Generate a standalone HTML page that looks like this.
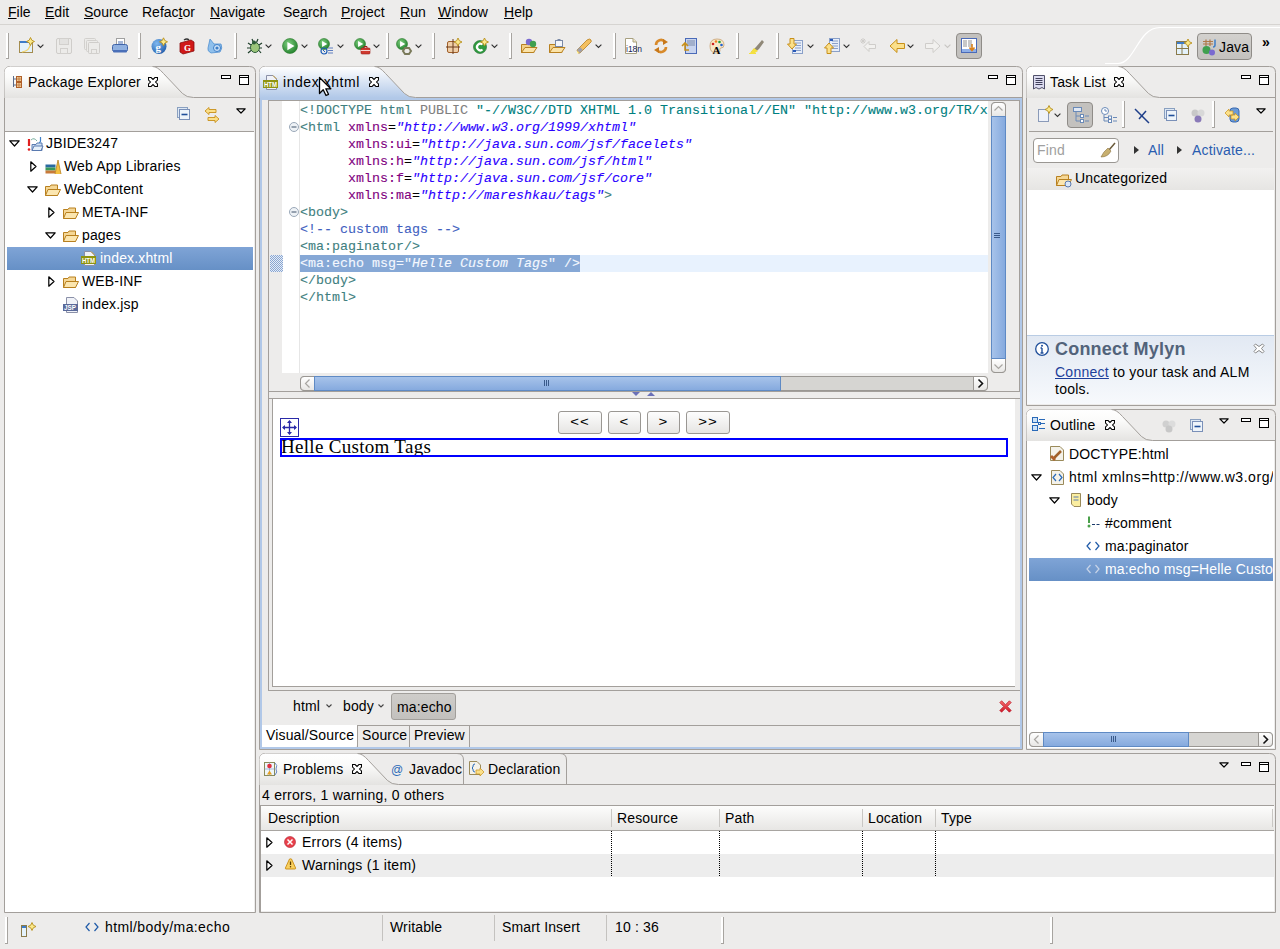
<!DOCTYPE html><html><head><meta charset="utf-8"><style>
html,body{margin:0;padding:0}
body{width:1280px;height:949px;position:relative;overflow:hidden;background:#edeceb;font-family:"Liberation Sans",sans-serif;font-size:14px;color:#000}
.a{position:absolute}
.t{position:absolute;white-space:pre;line-height:14px;font-family:"Liberation Sans",sans-serif;letter-spacing:0.15px}
.m{position:absolute;white-space:pre;font-family:"Liberation Mono",monospace;font-size:13.33px;line-height:17px;-webkit-text-stroke:0.1px currentColor}
svg.c{position:absolute;left:0;top:0}
svg.i{position:absolute;overflow:visible}
.tg{color:#3f7f7f}.at{color:#7f007f}.av{color:#2a00ff;font-style:italic}.cm{color:#3f5fbf}.pu{color:#808080}.dt{color:#008080}
.clip{position:absolute;overflow:hidden}
</style></head><body>
<svg class="c" width="1280" height="949"><defs>
<linearGradient id="gw" x1="0" y1="0" x2="0" y2="1"><stop offset="0" stop-color="#ffffff"/><stop offset="0.35" stop-color="#fbfbfa"/><stop offset="1" stop-color="#e4e3e1"/></linearGradient>
<linearGradient id="gb" x1="0" y1="0" x2="0" y2="1"><stop offset="0" stop-color="#ffffff"/><stop offset="1" stop-color="#b1c8e8"/></linearGradient>
</defs><path d="M4.5 912.5 V72.5 Q4.5 66.5 10.5 66.5 H249.5 Q255.5 66.5 255.5 72.5 V912.5 Z" fill="#edeceb" stroke="#a39f9b"/><path d="M4.5 98 V72.5 Q4.5 66.5 10.5 66.5 H152.5 Q157.5 66.5 163.5 73.5 L182.5 93.5 Q186.5 97.5 193.5 97.5 V98 Z" fill="url(#gw)"/><path d="M152.5 66.5 Q157.5 66.5 163.5 73.5 L182.5 93.5 Q186.5 97.5 193.5 97.5 H255.5" fill="none" stroke="#a39f9b"/><path d="M259.5 749.5 V72.5 Q259.5 66.5 265.5 66.5 H1016.5 Q1022.5 66.5 1022.5 72.5 V749.5 Z" fill="#edeceb" stroke="#a39f9b"/><path d="M259.5 98 V72.5 Q259.5 66.5 265.5 66.5 H374.5 Q379.5 66.5 385.5 73.5 L404.5 93.5 Q408.5 97.5 415.5 97.5 V98 Z" fill="url(#gb)"/><path d="M374.5 66.5 Q379.5 66.5 385.5 73.5 L404.5 93.5 Q408.5 97.5 415.5 97.5 H1022.5" fill="none" stroke="#a39f9b"/><path d="M1026.5 405.5 V72.5 Q1026.5 66.5 1032.5 66.5 H1269.5 Q1275.5 66.5 1275.5 72.5 V405.5 Z" fill="#edeceb" stroke="#a39f9b"/><path d="M1026.5 98 V72.5 Q1026.5 66.5 1032.5 66.5 H1118.5 Q1123.5 66.5 1129.5 73.5 L1148.5 93.5 Q1152.5 97.5 1159.5 97.5 V98 Z" fill="url(#gw)"/><path d="M1118.5 66.5 Q1123.5 66.5 1129.5 73.5 L1148.5 93.5 Q1152.5 97.5 1159.5 97.5 H1275.5" fill="none" stroke="#a39f9b"/><path d="M1026.5 749.5 V415.5 Q1026.5 409.5 1032.5 409.5 H1269.5 Q1275.5 409.5 1275.5 415.5 V749.5 Z" fill="#edeceb" stroke="#a39f9b"/><path d="M1026.5 441 V415.5 Q1026.5 409.5 1032.5 409.5 H1111.5 Q1116.5 409.5 1122.5 416.5 L1141.5 436.5 Q1145.5 440.5 1152.5 440.5 V441 Z" fill="url(#gw)"/><path d="M1111.5 409.5 Q1116.5 409.5 1122.5 416.5 L1141.5 436.5 Q1145.5 440.5 1152.5 440.5 H1275.5" fill="none" stroke="#a39f9b"/><path d="M259.5 912.5 V759.5 Q259.5 753.5 265.5 753.5 H1269.5 Q1275.5 753.5 1275.5 759.5 V912.5 Z" fill="#edeceb" stroke="#a39f9b"/><path d="M259.5 785 V759.5 Q259.5 753.5 265.5 753.5 H357.5 Q362.5 753.5 368.5 760.5 L387.5 780.5 Q391.5 784.5 398.5 784.5 V785 Z" fill="url(#gw)"/><path d="M357.5 753.5 Q362.5 753.5 368.5 760.5 L387.5 780.5 Q391.5 784.5 398.5 784.5 H1275.5" fill="none" stroke="#a39f9b"/><path d="M463.5 784 V760 Q463.5 753.5 457 753.5" fill="none" stroke="#a39f9b"/><path d="M566.5 784 V760 Q566.5 753.5 560 753.5" fill="none" stroke="#a39f9b"/></svg>
<div class="t" style="left:8px;top:5px;font-size:14px;color:#000;letter-spacing:0"><u>F</u>ile</div>
<div class="t" style="left:45px;top:5px;font-size:14px;color:#000;letter-spacing:0"><u>E</u>dit</div>
<div class="t" style="left:84px;top:5px;font-size:14px;color:#000;letter-spacing:0"><u>S</u>ource</div>
<div class="t" style="left:142px;top:5px;font-size:14px;color:#000;letter-spacing:0">Refac<u>t</u>or</div>
<div class="t" style="left:210px;top:5px;font-size:14px;color:#000;letter-spacing:0"><u>N</u>avigate</div>
<div class="t" style="left:283px;top:5px;font-size:14px;color:#000;letter-spacing:0">Se<u>a</u>rch</div>
<div class="t" style="left:341px;top:5px;font-size:14px;color:#000;letter-spacing:0"><u>P</u>roject</div>
<div class="t" style="left:400px;top:5px;font-size:14px;color:#000;letter-spacing:0"><u>R</u>un</div>
<div class="t" style="left:438px;top:5px;font-size:14px;color:#000;letter-spacing:0"><u>W</u>indow</div>
<div class="t" style="left:504px;top:5px;font-size:14px;color:#000;letter-spacing:0"><u>H</u>elp</div>
<div class="a" style="left:0px;top:24px;width:1280px;height:1px;background:#d6d4d1"></div>
<div class="a" style="left:956px;top:33px;width:26px;height:26px;box-sizing:border-box;border:1px solid #8f8c88;border-radius:4px;background:#c3c1be"></div>
<div class="a" style="left:6px;top:33px;width:2px;height:26px;background:#fff"></div><div class="a" style="left:8px;top:33px;width:1px;height:26px;background:#a7a4a0"></div><div class="a" style="left:6px;top:58px;width:3px;height:1px;background:#a7a4a0"></div>
<svg class="i" style="left:19px;top:38px" width="16" height="16" viewBox="0 0 16 16"><rect x="0.5" y="3.5" width="13" height="11" fill="#e4f2fb" stroke="#a48c4e"/><rect x="1" y="3" width="12" height="2" fill="#3d7cc9"/><path d="M3 14 Q11 13 11.5 5" fill="none" stroke="#f3d36b" stroke-width="1.2"/><g transform="translate(11.5,3.5) scale(1.0)"><path d="M0 -4 L1.3 -1.3 L4 0 L1.3 1.3 L0 4 L-1.3 1.3 L-4 0 L-1.3 -1.3 Z" fill="#fbe98a" stroke="#b8901c" stroke-width="0.9"/></g></svg>
<svg class="i" style="left:37px;top:44px" width="7" height="5" viewBox="0 0 7 5"><path d="M0.6 0.6 L3.5 3.4 L6.4 0.6" fill="none" stroke="#333" stroke-width="1.15"/></svg>
<svg class="i" style="left:56px;top:38px" width="16" height="16" viewBox="0 0 16 16"><rect x="0.5" y="0.5" width="15" height="15" rx="1.5" fill="#ecebe9" stroke="#cfcdca"/><rect x="3.5" y="0.5" width="9" height="6" fill="#e3e2e0" stroke="#d2d0cd"/><rect x="4.5" y="10.5" width="7" height="5" fill="#ecebe9" stroke="#d2d0cd"/></svg>
<svg class="i" style="left:84px;top:38px" width="16" height="16" viewBox="0 0 16 16"><rect x="0.5" y="0.5" width="11" height="11" rx="1" fill="#ecebe9" stroke="#d2d0cd"/><rect x="2.5" y="2.5" width="11" height="11" rx="1" fill="#ecebe9" stroke="#d2d0cd"/><rect x="4.5" y="4.5" width="11" height="11" rx="1" fill="#ecebe9" stroke="#cfcdca"/><rect x="7.5" y="11.5" width="5" height="4" fill="#ecebe9" stroke="#d2d0cd"/></svg>
<svg class="i" style="left:112px;top:38px" width="16" height="16" viewBox="0 0 16 16"><rect x="4.5" y="0.5" width="8" height="8" fill="#fff" stroke="#a0a0a0"/><path d="M6 4h5M6 6h5" stroke="#4a6fb0"/><rect x="0.5" y="6.5" width="15" height="7" rx="2" fill="#8fb0e0" stroke="#3f63a8"/><rect x="1" y="12" width="14" height="2.5" rx="1" fill="#4a6fb8"/></svg>
<div class="a" style="left:138px;top:33px;width:2px;height:26px;background:#fff"></div><div class="a" style="left:140px;top:33px;width:1px;height:26px;background:#a7a4a0"></div><div class="a" style="left:138px;top:58px;width:3px;height:1px;background:#a7a4a0"></div>
<svg class="i" style="left:151px;top:38px" width="16" height="16" viewBox="0 0 16 16"><defs><radialGradient id="gg" cx="0.35" cy="0.3" r="0.8"><stop offset="0" stop-color="#7fb8f0"/><stop offset="1" stop-color="#1d5aa8"/></radialGradient></defs><circle cx="8" cy="8.5" r="7.5" fill="url(#gg)"/><text x="4.5" y="12.5" font-family="Liberation Serif" font-size="11" fill="#fff" font-weight="bold">g</text><g transform="translate(12.5,3.8) scale(1.0)"><path d="M0 -4 L1.3 -1.3 L4 0 L1.3 1.3 L0 4 L-1.3 1.3 L-4 0 L-1.3 -1.3 Z" fill="#fbe98a" stroke="#b8901c" stroke-width="0.9"/></g></svg>
<svg class="i" style="left:179px;top:38px" width="16" height="16" viewBox="0 0 16 16"><path d="M1 5 L12 2 L15 4 L15 13 L4 16 L1 14 Z" fill="#d01818" stroke="#8a0e0e" stroke-width="0.8"/><path d="M5 2 Q8 0 10 2" fill="none" stroke="#333" stroke-width="1.5"/><text x="5" y="12.5" font-family="Liberation Serif" font-size="9" fill="#fff" font-weight="bold">G</text></svg>
<svg class="i" style="left:207px;top:38px" width="16" height="16" viewBox="0 0 16 16"><path d="M3 1 L7 6 L14 6 Q16 10 13 14 L4 15 Q0 13 1 10 Z" fill="#8fc0ec" stroke="#4f8fd0" stroke-width="0.8"/><circle cx="10" cy="10" r="3.5" fill="#cfe4f8" stroke="#3f7fc8"/><circle cx="10" cy="10" r="1.6" fill="#3f7fc8"/></svg>
<div class="a" style="left:234px;top:33px;width:2px;height:26px;background:#fff"></div><div class="a" style="left:236px;top:33px;width:1px;height:26px;background:#a7a4a0"></div><div class="a" style="left:234px;top:58px;width:3px;height:1px;background:#a7a4a0"></div>
<svg class="i" style="left:246px;top:38px" width="16" height="16" viewBox="0 0 16 16"><ellipse cx="9" cy="9.5" rx="4.5" ry="5" fill="#9cc67a" stroke="#2f5d3a"/><path d="M2 5 L5 7 M1 10 L4.5 10 M2 15 L5 12.5 M16 5 L13 7 M16 10 L13.5 10 M15 15 L13 12.5 M6 1 L7.5 4.5 M12 1 L10.5 4.5" stroke="#1f3f2a" stroke-width="1.2"/><circle cx="8" cy="4.5" r="2" fill="#2f5d3a"/></svg>
<svg class="i" style="left:265px;top:44px" width="7" height="5" viewBox="0 0 7 5"><path d="M0.6 0.6 L3.5 3.4 L6.4 0.6" fill="none" stroke="#333" stroke-width="1.15"/></svg>
<svg class="i" style="left:282px;top:38px" width="16" height="16" viewBox="0 0 16 16"><defs><radialGradient id="gp" cx="0.4" cy="0.35" r="0.7"><stop offset="0" stop-color="#7fcf7f"/><stop offset="1" stop-color="#1f7f2a"/></radialGradient></defs><circle cx="8" cy="8" r="7.5" fill="url(#gp)" stroke="#2a7a2a" stroke-width="0.6"/><path d="M5.375 3.875 L12.5 8 L5.375 12.125 Z" fill="#fff"/></svg>
<svg class="i" style="left:301px;top:44px" width="7" height="5" viewBox="0 0 7 5"><path d="M0.6 0.6 L3.5 3.4 L6.4 0.6" fill="none" stroke="#333" stroke-width="1.15"/></svg>
<svg class="i" style="left:318px;top:38px" width="16" height="16" viewBox="0 0 16 16"><defs><radialGradient id="gp" cx="0.4" cy="0.35" r="0.7"><stop offset="0" stop-color="#7fcf7f"/><stop offset="1" stop-color="#1f7f2a"/></radialGradient></defs><circle cx="6" cy="6" r="5.5" fill="url(#gp)" stroke="#2a7a2a" stroke-width="0.6"/><path d="M4.075 2.9749999999999996 L9.3 6 L4.075 9.025 Z" fill="#fff"/><circle cx="6" cy="13" r="3" fill="none" stroke="#1f5fb8" stroke-width="1.2"/><path d="M5 12 L7 14" stroke="#1f5fb8"/><path d="M10 10h5M10 12.5h5M10 15h5" stroke="#5f7fc0" stroke-width="1"/></svg>
<svg class="i" style="left:337px;top:44px" width="7" height="5" viewBox="0 0 7 5"><path d="M0.6 0.6 L3.5 3.4 L6.4 0.6" fill="none" stroke="#333" stroke-width="1.15"/></svg>
<svg class="i" style="left:354px;top:38px" width="16" height="16" viewBox="0 0 16 16"><defs><radialGradient id="gp" cx="0.4" cy="0.35" r="0.7"><stop offset="0" stop-color="#7fcf7f"/><stop offset="1" stop-color="#1f7f2a"/></radialGradient></defs><circle cx="6" cy="6" r="5.5" fill="url(#gp)" stroke="#2a7a2a" stroke-width="0.6"/><path d="M4.075 2.9749999999999996 L9.3 6 L4.075 9.025 Z" fill="#fff"/><rect x="7" y="10" width="9" height="6" rx="1" fill="#d03a30" stroke="#9a1f18" stroke-width="0.6"/><path d="M10 10 V8.5 H13 V10" fill="none" stroke="#9a1f18"/><path d="M7 12.5 H16" stroke="#fff" stroke-width="0.8"/></svg>
<svg class="i" style="left:373px;top:44px" width="7" height="5" viewBox="0 0 7 5"><path d="M0.6 0.6 L3.5 3.4 L6.4 0.6" fill="none" stroke="#333" stroke-width="1.15"/></svg>
<div class="a" style="left:386px;top:33px;width:2px;height:26px;background:#fff"></div><div class="a" style="left:388px;top:33px;width:1px;height:26px;background:#a7a4a0"></div><div class="a" style="left:386px;top:58px;width:3px;height:1px;background:#a7a4a0"></div>
<svg class="i" style="left:396px;top:38px" width="16" height="16" viewBox="0 0 16 16"><defs><radialGradient id="gp" cx="0.4" cy="0.35" r="0.7"><stop offset="0" stop-color="#7fcf7f"/><stop offset="1" stop-color="#1f7f2a"/></radialGradient></defs><circle cx="6" cy="6" r="5.5" fill="url(#gp)" stroke="#2a7a2a" stroke-width="0.6"/><path d="M4.075 2.9749999999999996 L9.3 6 L4.075 9.025 Z" fill="#fff"/><path d="M9 10 L13 10 L15 13 L13 16 L9 16 L7 13 Z" fill="none" stroke="#7a7a5a" stroke-width="2"/></svg>
<svg class="i" style="left:415px;top:44px" width="7" height="5" viewBox="0 0 7 5"><path d="M0.6 0.6 L3.5 3.4 L6.4 0.6" fill="none" stroke="#333" stroke-width="1.15"/></svg>
<div class="a" style="left:432px;top:33px;width:2px;height:26px;background:#fff"></div><div class="a" style="left:434px;top:33px;width:1px;height:26px;background:#a7a4a0"></div><div class="a" style="left:432px;top:58px;width:3px;height:1px;background:#a7a4a0"></div>
<svg class="i" style="left:446px;top:38px" width="16" height="16" viewBox="0 0 16 16"><rect x="1.5" y="3.5" width="11" height="11" rx="1.5" fill="#f0cfa8" stroke="#a0602a"/><path d="M7 1 V16 M0 9 H14" stroke="#6a3a1a" stroke-width="1"/><g transform="translate(12,4) scale(1.0)"><path d="M0 -4 L1.3 -1.3 L4 0 L1.3 1.3 L0 4 L-1.3 1.3 L-4 0 L-1.3 -1.3 Z" fill="#fbe98a" stroke="#b8901c" stroke-width="0.9"/></g></svg>
<svg class="i" style="left:473px;top:38px" width="16" height="16" viewBox="0 0 16 16"><circle cx="7" cy="9" r="6.5" fill="#2f9a3f" stroke="#1f6a2a" stroke-width="0.6"/><path d="M9.5 6.5 A3.3 3.3 0 1 0 9.5 11.5" fill="none" stroke="#fff" stroke-width="2.2"/><g transform="translate(11.5,4) scale(1.0)"><path d="M0 -4 L1.3 -1.3 L4 0 L1.3 1.3 L0 4 L-1.3 1.3 L-4 0 L-1.3 -1.3 Z" fill="#fbe98a" stroke="#b8901c" stroke-width="0.9"/></g></svg>
<svg class="i" style="left:491px;top:44px" width="7" height="5" viewBox="0 0 7 5"><path d="M0.6 0.6 L3.5 3.4 L6.4 0.6" fill="none" stroke="#333" stroke-width="1.15"/></svg>
<div class="a" style="left:509px;top:33px;width:2px;height:26px;background:#fff"></div><div class="a" style="left:511px;top:33px;width:1px;height:26px;background:#a7a4a0"></div><div class="a" style="left:509px;top:58px;width:3px;height:1px;background:#a7a4a0"></div>
<svg class="i" style="left:521px;top:38px" width="16" height="16" viewBox="0 0 16 16"><path d="M0.5 6.5 H6 L7 5 H13 V14.5 H0.5 Z" fill="#f3d088" stroke="#b8801f"/><path d="M0.5 14.5 L4 9.5 H16 L12.5 14.5 Z" fill="#fbe3a8" stroke="#b8801f"/><circle cx="8" cy="4" r="3.2" fill="#7a6ad0"/><circle cx="12" cy="6" r="3.2" fill="#3fa04f"/></svg>
<svg class="i" style="left:549px;top:38px" width="16" height="16" viewBox="0 0 16 16"><path d="M0.5 6.5 H6 L7 5 H13 V14.5 H0.5 Z" fill="#f3d088" stroke="#b8801f"/><path d="M0.5 14.5 L4 9.5 H16 L12.5 14.5 Z" fill="#fbe3a8" stroke="#b8801f"/><rect x="6.5" y="2.5" width="7" height="6" fill="#f4f6fa" stroke="#7a8aa8"/><rect x="8.5" y="1" width="3" height="2" fill="#7a8aa8"/></svg>
<svg class="i" style="left:576px;top:38px" width="16" height="16" viewBox="0 0 16 16"><path d="M2 15 L1 12 L11 2 Q14 0 15 2 Q16 4 14 5 L4 15 Z" fill="#f4c060" stroke="#b8801f" stroke-width="0.8"/><path d="M1 12 L4 15 L7 12 L4 9 Z" fill="#a0a0a8"/><path d="M1 13 L3 15 L1 15.5 Z" fill="#fff8a0"/></svg>
<svg class="i" style="left:595px;top:44px" width="7" height="5" viewBox="0 0 7 5"><path d="M0.6 0.6 L3.5 3.4 L6.4 0.6" fill="none" stroke="#333" stroke-width="1.15"/></svg>
<div class="a" style="left:613px;top:33px;width:2px;height:26px;background:#fff"></div><div class="a" style="left:615px;top:33px;width:1px;height:26px;background:#a7a4a0"></div><div class="a" style="left:613px;top:58px;width:3px;height:1px;background:#a7a4a0"></div>
<svg class="i" style="left:625px;top:38px" width="16" height="16" viewBox="0 0 16 16"><path d="M0.5 0.5 H8 L11.5 4 V15.5 H0.5 Z" fill="#fff" stroke="#a8a080"/><path d="M8 0.5 V4 H11.5" fill="#f0e8c0" stroke="#a8a080"/><text x="1" y="14" font-family="Liberation Sans" font-size="9" fill="#13235a" textLength="16" lengthAdjust="spacingAndGlyphs">i18n</text></svg>
<svg class="i" style="left:653px;top:38px" width="16" height="16" viewBox="0 0 16 16"><path d="M3 7 A5 5 0 0 1 12 4" fill="none" stroke="#d88a2a" stroke-width="2.6"/><path d="M13 9 A5 5 0 0 1 4 12" fill="none" stroke="#d88a2a" stroke-width="2.6"/><path d="M10 1 L15 4 L10 7Z M6 9 L1 12 L6 15Z" fill="#c8781a"/></svg>
<svg class="i" style="left:681px;top:38px" width="16" height="16" viewBox="0 0 16 16"><rect x="4.5" y="0.5" width="11" height="15" fill="#c8d4ee" stroke="#4a6ab8"/><path d="M6 3h8M6 5h8M6 7h8" stroke="#7a8aa8"/><path d="M1 8 L4 5 L7 8 M4 6 V12 H8" fill="none" stroke="#c8901a" stroke-width="1.6"/></svg>
<svg class="i" style="left:709px;top:38px" width="16" height="16" viewBox="0 0 16 16"><path d="M1 8 Q1 1 8 1 Q15 1 15 7 Q15 10 12 10 Q10 10 11 13 Q11 15 7 15 Q1 15 1 8Z" fill="#f8e8c8" stroke="#c8a070" stroke-width="0.8"/><circle cx="4" cy="6" r="1.3" fill="#d02020"/><circle cx="7" cy="3.5" r="1.3" fill="#f08020"/><circle cx="10.5" cy="4" r="1.3" fill="#20a040"/><circle cx="12.5" cy="7" r="1.3" fill="#2060d0"/><text x="3.5" y="15.5" font-family="Liberation Serif" font-size="11" font-weight="bold" fill="#000">A</text></svg>
<div class="a" style="left:736px;top:33px;width:2px;height:26px;background:#fff"></div><div class="a" style="left:738px;top:33px;width:1px;height:26px;background:#a7a4a0"></div><div class="a" style="left:736px;top:58px;width:3px;height:1px;background:#a7a4a0"></div>
<svg class="i" style="left:749px;top:38px" width="16" height="16" viewBox="0 0 16 16"><path d="M2 14 L7 9 L13 2 L15 4 L10 11 L5 15 Z" fill="#908878"/><path d="M1 15 L5 10 L9 13 L5 15.5 Z" fill="#f4e040"/><path d="M0 15.5 H7" stroke="#f4e040" stroke-width="1"/></svg>
<div class="a" style="left:776px;top:33px;width:2px;height:26px;background:#fff"></div><div class="a" style="left:778px;top:33px;width:1px;height:26px;background:#a7a4a0"></div><div class="a" style="left:776px;top:58px;width:3px;height:1px;background:#a7a4a0"></div>
<svg class="i" style="left:787px;top:38px" width="16" height="16" viewBox="0 0 16 16"><rect x="5.5" y="2.5" width="10" height="13" fill="#e8eef8" stroke="#8aa0c8"/><path d="M8 5h6M8 7.5h6M8 10h6M8 12.5h6" stroke="#8aa0c8"/><rect x="6" y="12" width="3" height="2" fill="#2a5ab8"/><path d="M3 0.5 H7 V6 H9.5 L5 11 L0.5 6 H3 Z" fill="#fbe08a" stroke="#c8901a"/></svg>
<svg class="i" style="left:807px;top:44px" width="7" height="5" viewBox="0 0 7 5"><path d="M0.6 0.6 L3.5 3.4 L6.4 0.6" fill="none" stroke="#333" stroke-width="1.15"/></svg>
<svg class="i" style="left:824px;top:38px" width="16" height="16" viewBox="0 0 16 16"><rect x="5.5" y="0.5" width="10" height="13" fill="#e8eef8" stroke="#8aa0c8"/><path d="M8 3h6M8 5.5h6M8 8h6M8 10.5h6" stroke="#8aa0c8"/><rect x="6" y="1" width="3" height="2" fill="#2a5ab8"/><path d="M3 15.5 H7 V10 H9.5 L5 5 L0.5 10 H3 Z" fill="#fbe08a" stroke="#c8901a"/></svg>
<svg class="i" style="left:843px;top:44px" width="7" height="5" viewBox="0 0 7 5"><path d="M0.6 0.6 L3.5 3.4 L6.4 0.6" fill="none" stroke="#333" stroke-width="1.15"/></svg>
<svg class="i" style="left:860px;top:38px" width="16" height="16" viewBox="0 0 16 16"><path d="M15.5 6.5 H9 V3.5 L4 8.5 L9 13.5 V10.5 H15.5 Z" fill="#f2f1ef" stroke="#cfcdca"/><path d="M1 1 L5 5 M5 1 L1 5 M3 0 V6 M0 3 H6" stroke="#cfcdca"/></svg>
<svg class="i" style="left:889px;top:38px" width="16" height="16" viewBox="0 0 16 16"><path d="M15.5 5.5 H8 V1.5 L1 8 L8 14.5 V10.5 H15.5 Z" fill="#fbe08a" stroke="#c8901a"/></svg>
<svg class="i" style="left:907px;top:44px" width="7" height="5" viewBox="0 0 7 5"><path d="M0.6 0.6 L3.5 3.4 L6.4 0.6" fill="none" stroke="#333" stroke-width="1.15"/></svg>
<svg class="i" style="left:925px;top:38px" width="16" height="16" viewBox="0 0 16 16"><path d="M0.5 5.5 H8 V1.5 L15 8 L8 14.5 V10.5 H0.5 Z" fill="#f2f1ef" stroke="#cfcdca"/></svg>
<svg class="i" style="left:944px;top:44px" width="7" height="5" viewBox="0 0 7 5"><path d="M0.6 0.6 L3.5 3.4 L6.4 0.6" fill="none" stroke="#c8c6c3" stroke-width="1.15"/></svg>
<svg class="i" style="left:961px;top:38px" width="16" height="16" viewBox="0 0 16 16"><rect x="0.5" y="0.5" width="15" height="14" fill="#fff" stroke="#4a6ab8"/><rect x="2" y="2" width="4" height="7" fill="#c8c8c8"/><rect x="7" y="2" width="4" height="7" fill="#c8c8c8"/><rect x="1" y="11" width="14" height="3" fill="#8fb0e8"/><path d="M11 6 V12 M8.5 9.5 L11 12.5 L13.5 9.5" fill="none" stroke="#d8801a" stroke-width="1.6"/></svg>
<svg class="c" width="1280" height="70"><path d="M1105 63.5 H1118 C1135 63.5 1138 27.5 1160 27.5 H1280" fill="none" stroke="#fff" stroke-width="1.2"/></svg>
<svg class="i" style="left:1176px;top:39px" width="16" height="16" viewBox="0 0 16 16"><rect x="0.5" y="2.5" width="12" height="13" fill="#e4f2fb" stroke="#8a7a4a"/><rect x="1" y="3" width="11" height="2" fill="#3d7cc9"/><path d="M6 5 V15 M1 9.5 H12" stroke="#8a7a4a"/><g transform="translate(12,4) scale(1.0)"><path d="M0 -4 L1.3 -1.3 L4 0 L1.3 1.3 L0 4 L-1.3 1.3 L-4 0 L-1.3 -1.3 Z" fill="#fbe98a" stroke="#b8901c" stroke-width="0.9"/></g></svg>
<div class="a" style="left:1197px;top:33px;width:55px;height:27px;box-sizing:border-box;border:1px solid #8f8c88;border-radius:4px;background:linear-gradient(#d3d1ce,#c3c1be)"></div>
<svg class="i" style="left:1202px;top:39px" width="16" height="16" viewBox="0 0 16 16"><path d="M4 0.5 V7 M8 0.5 V7 M1 2.5 H11 M1 5 H11" stroke="#b07a4a" stroke-width="1.2"/><circle cx="4.5" cy="11" r="4" fill="#3fa04f"/><circle cx="10" cy="13.5" r="3" fill="#7a6ad0"/><path d="M13 0.5 V6 Q13 8 11 8" fill="none" stroke="#3f7fc8" stroke-width="1.5"/></svg>
<div class="t" style="left:1219px;top:40px;font-size:14px;color:#000;">Java</div>
<div class="t" style="left:1262px;top:35px;font-size:14px;color:#000;font-weight:bold">»</div>
<svg class="i" style="left:12px;top:76px" width="10" height="12" viewBox="0 0 10 12"><path d="M1.5 0 V11 M1.5 3 H4 M1.5 9 H4" stroke="#5a6a88" stroke-width="1"/><rect x="4.5" y="0.5" width="5" height="5" fill="#f0c890" stroke="#b0602a"/><rect x="4.5" y="6.5" width="5" height="5" fill="#f0c890" stroke="#b0602a"/><path d="M7 0.5 V5.5 M4.5 3 H9.5 M7 6.5 V11.5 M4.5 9 H9.5" stroke="#b0602a" stroke-width="0.6"/></svg>
<div class="t" style="left:28px;top:75px;font-size:14px;color:#000;">Package Explorer</div>
<svg class="i" style="left:148px;top:77px" width="10" height="10" viewBox="0 0 11 11"><path d="M0.6 0.6 H3.4 L5.5 2.7 L7.6 0.6 H10.4 V3.4 L8.3 5.5 L10.4 7.6 V10.4 H7.6 L5.5 8.3 L3.4 10.4 H0.6 V7.6 L2.7 5.5 L0.6 3.4 Z" fill="#fff" stroke="#000" stroke-width="1.15"/></svg>
<svg class="i" style="left:221px;top:75px" width="10" height="5" viewBox="0 0 10 5"><rect x="0.5" y="0.5" width="9" height="3" fill="#fff" stroke="#000"/></svg>
<svg class="i" style="left:239px;top:75px" width="10" height="10" viewBox="0 0 10 10"><rect x="0.5" y="0.5" width="9" height="9" fill="#fff" stroke="#000"/><path d="M0.5 2.5 H9.5" stroke="#000"/></svg>
<svg class="i" style="left:177px;top:107px" width="13" height="13" viewBox="0 0 13 13"><rect x="0.5" y="0.5" width="10" height="10" fill="#dde8f4" stroke="#8aa0c0"/><rect x="2.5" y="2.5" width="10" height="10" fill="#eef4fa" stroke="#7a90b8"/><path d="M4.5 7.5 H10.5" stroke="#1f4f9a" stroke-width="1.6"/></svg>
<svg class="i" style="left:204px;top:107px" width="16" height="16" viewBox="0 0 16 16"><path d="M1 4 L5 0.5 V2.5 H12 V5.5 H5 V7.5 Z" fill="#fbe08a" stroke="#c8901a" stroke-width="0.9"/><path d="M15 12 L11 15.5 V13.5 H4 V10.5 H11 V8.5 Z" fill="#fbe08a" stroke="#c8901a" stroke-width="0.9"/></svg>
<svg class="i" style="left:236px;top:108px" width="10" height="6" viewBox="0 0 10 6"><path d="M0.8 0.8 H9.2 L5 5 Z" fill="#fff" stroke="#000" stroke-width="1.2" stroke-linejoin="round"/></svg>
<div class="a" style="left:5px;top:131px;width:249px;height:1px;background:#a39f9b"></div>
<div class="a" style="left:5px;top:132px;width:249px;height:780px;background:#fff"></div>
<div class="a" style="left:7px;top:247px;width:246px;height:23px;background:linear-gradient(#7fa4d6,#6690c6)"></div>
<svg class="i" style="left:27px;top:136px" width="16" height="16" viewBox="0 0 16 16"><path d="M5 8.5 H9 L10 7 H15 V14.5 H5 Z" fill="#cfe0f4" stroke="#5a7ab0"/><path d="M5 14.5 L7 10 H16 L14 14.5 Z" fill="#e6f0fa" stroke="#5a7ab0"/><path d="M2 3 V10" stroke="#e02020" stroke-width="2.2"/><circle cx="2" cy="13.5" r="1.3" fill="#e02020"/><path d="M13.5 1 V5 Q13.5 6.5 12 6.5" fill="none" stroke="#3f7fc8" stroke-width="1.2"/><path d="M4 4 Q7 1 10 5" fill="none" stroke="#7ab0a0"/></svg>
<svg class="i" style="left:9px;top:140px" width="11" height="7" viewBox="0 0 11 7"><path d="M0.8 0.8 H10.2 L5.5 6 Z" fill="#fff" stroke="#000" stroke-width="1.2" stroke-linejoin="round"/></svg>
<div class="t" style="left:46px;top:136px;font-size:14px;color:#000;">JBIDE3247</div>
<svg class="i" style="left:45px;top:159px" width="16" height="16" viewBox="0 0 16 16"><rect x="0.5" y="5.5" width="10" height="3" fill="#2a6aa0"/><rect x="0.5" y="8.5" width="10" height="3" fill="#3a9a5a"/><rect x="0.5" y="11.5" width="10" height="3" fill="#c87a3a"/><path d="M10 15 L13 1 L16 15" fill="#f4c040" stroke="#b8801f" stroke-width="0.8"/></svg>
<svg class="i" style="left:30px;top:161px" width="7" height="11" viewBox="0 0 7 11"><path d="M0.8 0.8 V10.2 L6 5.5 Z" fill="#fff" stroke="#000" stroke-width="1.2" stroke-linejoin="round"/></svg>
<div class="t" style="left:64px;top:159px;font-size:14px;color:#000;">Web App Libraries</div>
<svg class="i" style="left:45px;top:182px" width="16" height="16" viewBox="0 0 16 16"><path d="M0.5 4.5 H5 L6 3 H12.5 V13.5 H0.5 Z" fill="#f5d796" stroke="#b8801f"/><path d="M0.5 13.5 L3 7.5 H15.5 L12.5 13.5 Z" fill="#fbe6b0" stroke="#b8801f"/></svg>
<svg class="i" style="left:27px;top:186px" width="11" height="7" viewBox="0 0 11 7"><path d="M0.8 0.8 H10.2 L5.5 6 Z" fill="#fff" stroke="#000" stroke-width="1.2" stroke-linejoin="round"/></svg>
<div class="t" style="left:64px;top:182px;font-size:14px;color:#000;">WebContent</div>
<svg class="i" style="left:63px;top:205px" width="16" height="16" viewBox="0 0 16 16"><path d="M0.5 4.5 H5 L6 3 H12.5 V13.5 H0.5 Z" fill="#f5d796" stroke="#b8801f"/><path d="M0.5 13.5 L3 7.5 H15.5 L12.5 13.5 Z" fill="#fbe6b0" stroke="#b8801f"/></svg>
<svg class="i" style="left:48px;top:207px" width="7" height="11" viewBox="0 0 7 11"><path d="M0.8 0.8 V10.2 L6 5.5 Z" fill="#fff" stroke="#000" stroke-width="1.2" stroke-linejoin="round"/></svg>
<div class="t" style="left:82px;top:205px;font-size:14px;color:#000;">META-INF</div>
<svg class="i" style="left:63px;top:228px" width="16" height="16" viewBox="0 0 16 16"><path d="M0.5 4.5 H5 L6 3 H12.5 V13.5 H0.5 Z" fill="#f5d796" stroke="#b8801f"/><path d="M0.5 13.5 L3 7.5 H15.5 L12.5 13.5 Z" fill="#fbe6b0" stroke="#b8801f"/></svg>
<svg class="i" style="left:45px;top:232px" width="11" height="7" viewBox="0 0 11 7"><path d="M0.8 0.8 H10.2 L5.5 6 Z" fill="#fff" stroke="#000" stroke-width="1.2" stroke-linejoin="round"/></svg>
<div class="t" style="left:82px;top:228px;font-size:14px;color:#000;">pages</div>
<svg class="i" style="left:81px;top:251px" width="16" height="16" viewBox="0 0 16 16"><path d="M3.5 0.5 H10 L13.5 4 V14.5 H3.5 Z" fill="#f0f2f8" stroke="#8a90a8"/><path d="M10 0.5 L13.5 4" stroke="#c8a040"/><rect x="0" y="5" width="15" height="8" fill="#8f9410"/><text x="7.5" y="11.8" text-anchor="middle" font-family="Liberation Sans" font-size="7" font-weight="bold" fill="#fff" textLength="13" lengthAdjust="spacingAndGlyphs">HTM</text></svg>
<div class="t" style="left:100px;top:251px;font-size:14px;color:#fff;">index.xhtml</div>
<svg class="i" style="left:63px;top:274px" width="16" height="16" viewBox="0 0 16 16"><path d="M0.5 4.5 H5 L6 3 H12.5 V13.5 H0.5 Z" fill="#f5d796" stroke="#b8801f"/><path d="M0.5 13.5 L3 7.5 H15.5 L12.5 13.5 Z" fill="#fbe6b0" stroke="#b8801f"/></svg>
<svg class="i" style="left:48px;top:276px" width="7" height="11" viewBox="0 0 7 11"><path d="M0.8 0.8 V10.2 L6 5.5 Z" fill="#fff" stroke="#000" stroke-width="1.2" stroke-linejoin="round"/></svg>
<div class="t" style="left:82px;top:274px;font-size:14px;color:#000;">WEB-INF</div>
<svg class="i" style="left:63px;top:297px" width="16" height="16" viewBox="0 0 16 16"><path d="M3.5 0.5 H11 L14.5 4 V15.5 H3.5 Z" fill="#f0f2f8" stroke="#8a90a8"/><rect x="0" y="7" width="15" height="7" fill="#5a6a9a"/><text x="1" y="13" font-family="Liberation Sans" font-size="6.3" font-weight="bold" fill="#fff">JSP</text></svg>
<div class="t" style="left:82px;top:297px;font-size:14px;color:#000;">index.jsp</div>
<div class="a" style="left:260px;top:98px;width:762px;height:2px;background:#b1c8e8"></div>
<div class="a" style="left:260px;top:100px;width:2px;height:649px;background:#b1c8e8"></div>
<div class="a" style="left:1020px;top:100px;width:2px;height:649px;background:#b1c8e8"></div>
<div class="a" style="left:260px;top:747px;width:762px;height:2px;background:#b1c8e8"></div>
<svg class="i" style="left:263px;top:75px" width="16" height="16" viewBox="0 0 16 16"><path d="M3.5 0.5 H10 L13.5 4 V14.5 H3.5 Z" fill="#f0f2f8" stroke="#8a90a8"/><path d="M10 0.5 L13.5 4" stroke="#c8a040"/><rect x="0" y="5" width="15" height="8" fill="#8f9410"/><text x="7.5" y="11.8" text-anchor="middle" font-family="Liberation Sans" font-size="7" font-weight="bold" fill="#fff" textLength="13" lengthAdjust="spacingAndGlyphs">HTM</text></svg>
<div class="t" style="left:283px;top:75px;font-size:14px;color:#000;letter-spacing:0.55px">index.xhtml</div>
<svg class="i" style="left:369px;top:77px" width="10" height="10" viewBox="0 0 11 11"><path d="M0.6 0.6 H3.4 L5.5 2.7 L7.6 0.6 H10.4 V3.4 L8.3 5.5 L10.4 7.6 V10.4 H7.6 L5.5 8.3 L3.4 10.4 H0.6 V7.6 L2.7 5.5 L0.6 3.4 Z" fill="#fff" stroke="#000" stroke-width="1.15"/></svg>
<svg class="i" style="left:988px;top:75px" width="10" height="5" viewBox="0 0 10 5"><rect x="0.5" y="0.5" width="9" height="3" fill="#fff" stroke="#000"/></svg>
<svg class="i" style="left:1006px;top:75px" width="10" height="10" viewBox="0 0 10 10"><rect x="0.5" y="0.5" width="9" height="9" fill="#fff" stroke="#000"/><path d="M0.5 2.5 H9.5" stroke="#000"/></svg>
<div class="a" style="left:268px;top:100px;width:752px;height:1px;background:#a39f9b"></div>
<div class="a" style="left:268px;top:100px;width:1px;height:292px;background:#a39f9b"></div>
<div class="a" style="left:1019px;top:100px;width:1px;height:291px;background:#a39f9b"></div>
<div class="a" style="left:282px;top:101px;width:706px;height:272px;background:#fff"></div>
<div class="a" style="left:299px;top:101px;width:1px;height:272px;background:#e6e6e6"></div>
<div class="a" style="left:300px;top:255px;width:688px;height:17px;background:#e8f2fe"></div>
<div class="a" style="left:300px;top:255px;width:280px;height:17px;background:#86a8d6"></div>
<div class="a" style="left:270px;top:255px;width:13px;height:17px;background:repeating-conic-gradient(#8aa6d0 0 25%,#e4ecf8 0 50%) 0 0/2px 2px"></div>
<div class="m" style="left:300px;top:102px"><span class="tg">&lt;!DOCTYPE html </span><span class="pu">PUBLIC </span><span class="dt">"-//W3C//DTD XHTML 1.0 Transitional//EN" "http://www.w3.org/TR/x</span>
<span class="tg">&lt;html </span><span class="at">xmlns</span>=<span class="av">"http://www.w3.org/1999/xhtml"</span>
      <span class="at">xmlns:ui</span>=<span class="av">"http://java.sun.com/jsf/facelets"</span>
      <span class="at">xmlns:h</span>=<span class="av">"http://java.sun.com/jsf/html"</span>
      <span class="at">xmlns:f</span>=<span class="av">"http://java.sun.com/jsf/core"</span>
      <span class="at">xmlns:ma</span>=<span class="av">"http://mareshkau/tags"</span><span class="tg">&gt;</span>
<span class="tg">&lt;body&gt;</span>
<span class="cm">&lt;!-- custom tags --&gt;</span>
<span class="tg">&lt;ma:paginator/&gt;</span>
<span style="color:#f4f8ff">&lt;ma:echo msg="<i>Helle Custom Tags</i>" /&gt;</span>
<span class="tg">&lt;/body&gt;</span>
<span class="tg">&lt;/html&gt;</span></div>
<svg class="i" style="left:289px;top:122px" width="10" height="10" viewBox="0 0 10 10"><circle cx="5" cy="5" r="4.5" fill="#eef2f6" stroke="#9aa8b8"/><path d="M2.5 5 H7.5" stroke="#5a6a80" stroke-width="1.2"/></svg>
<svg class="i" style="left:289px;top:207px" width="10" height="10" viewBox="0 0 10 10"><circle cx="5" cy="5" r="4.5" fill="#eef2f6" stroke="#9aa8b8"/><path d="M2.5 5 H7.5" stroke="#5a6a80" stroke-width="1.2"/></svg>
<div class="a" style="left:991px;top:102px;width:15px;height:271px;box-sizing:border-box;border:1px solid #9a9793;border-radius:4px;background:#d6d5d2"></div>
<div class="a" style="left:991px;top:102px;width:15px;height:15px;box-sizing:border-box;border:1px solid #9a9793;border-radius:4px 4px 0 0;background:linear-gradient(#fff,#e8e7e5)"></div>
<div class="a" style="left:991px;top:358px;width:15px;height:15px;box-sizing:border-box;border:1px solid #9a9793;border-radius:0 0 4px 4px;background:linear-gradient(#fff,#e8e7e5)"></div>
<div class="a" style="left:991px;top:116px;width:15px;height:243px;box-sizing:border-box;border:1px solid #5f8ac4;background:linear-gradient(90deg,#a7c3ea,#86aade)"></div>
<svg class="i" style="left:994px;top:106px" width="9" height="5" viewBox="0 0 9 5"><path d="M0.5 4.5 L4.5 0.5 L8.5 4.5" fill="none" stroke="#a8a6a2" stroke-width="1.2"/></svg>
<svg class="i" style="left:994px;top:364px" width="9" height="5" viewBox="0 0 9 5"><path d="M0.5 0.5 L4.5 4.5 L8.5 0.5" fill="none" stroke="#a8a6a2" stroke-width="1.2"/></svg>
<svg class="i" style="left:994px;top:233px" width="6" height="5" viewBox="0 0 6 5"><path d="M0 0.5 H6 M0 2.5 H6 M0 4.5 H6" stroke="#3a5a8a"/></svg>
<div class="a" style="left:300px;top:376px;width:688px;height:15px;box-sizing:border-box;border:1px solid #9a9793;border-radius:4px;background:#d6d5d2"></div>
<div class="a" style="left:300px;top:376px;width:15px;height:15px;box-sizing:border-box;border:1px solid #9a9793;border-radius:4px 0 0 4px;background:linear-gradient(#fff,#e8e7e5)"></div>
<div class="a" style="left:973px;top:376px;width:15px;height:15px;box-sizing:border-box;border:1px solid #9a9793;border-radius:0 4px 4px 0;background:linear-gradient(#fff,#e8e7e5)"></div>
<div class="a" style="left:314px;top:376px;width:467px;height:15px;box-sizing:border-box;border:1px solid #5f8ac4;background:linear-gradient(#a7c3ea,#86aade)"></div>
<svg class="i" style="left:305px;top:379px" width="5" height="9" viewBox="0 0 5 9"><path d="M4.5 0.5 L0.5 4.5 L4.5 8.5" fill="none" stroke="#a8a6a2" stroke-width="1.2"/></svg>
<svg class="i" style="left:978px;top:379px" width="5" height="9" viewBox="0 0 5 9"><path d="M0.5 0.5 L4.5 4.5 L0.5 8.5" fill="none" stroke="#111" stroke-width="1.6"/></svg>
<svg class="i" style="left:544px;top:380px" width="5" height="6" viewBox="0 0 5 6"><path d="M0.5 0 V6 M2.5 0 V6 M4.5 0 V6" stroke="#3a5a8a"/></svg>
<div class="a" style="left:269px;top:391px;width:751px;height:1px;background:#a39f9b"></div>
<div class="a" style="left:269px;top:398px;width:751px;height:1px;background:#a39f9b"></div>
<svg class="i" style="left:632px;top:392px" width="23" height="5" viewBox="0 0 23 5"><path d="M0 0 H8 L4 4 Z" fill="#6a70b8"/><path d="M15 4 H23 L19 0 Z" fill="#6a70b8"/></svg>
<div class="a" style="left:272px;top:399px;width:1px;height:288px;background:#a39f9b"></div>
<div class="a" style="left:273px;top:399px;width:742px;height:287px;background:#fff"></div>
<div class="a" style="left:272px;top:686px;width:743px;height:1px;background:#a39f9b"></div>
<div class="a" style="left:268px;top:690px;width:752px;height:1px;background:#a39f9b"></div>
<div class="a" style="left:268px;top:391px;width:1px;height:300px;background:#a39f9b"></div>
<svg class="i" style="left:280px;top:418px" width="19" height="19" viewBox="0 0 19 19"><rect x="0.5" y="0.5" width="18" height="18" fill="#fff" stroke="#2a2aa8"/><path d="M9.5 3 V16 M3 9.5 H16" stroke="#2a2aa8" stroke-width="1.3"/><path d="M9.5 2 L7 5 H12Z M9.5 17 L7 14 H12Z M2 9.5 L5 7 V12Z M17 9.5 L14 7 V12Z" fill="#2a2aa8"/></svg>
<div class="t" style="left:281px;top:437px;font-size:19px;line-height:19px;color:#000;font-family:'Liberation Serif',serif;letter-spacing:0.3px">Helle Custom Tags</div>
<div class="a" style="left:280px;top:438px;width:728px;height:19px;border:2px solid #0000ff;box-sizing:border-box"></div>
<div class="a" style="left:558px;top:411px;width:44px;height:23px;border:1px solid #9a9793;border-radius:3px;box-sizing:border-box;background:linear-gradient(#fdfdfd,#e6e5e3)"></div>
<div class="t" style="left:558px;top:415px;width:44px;text-align:center;font-size:15px;transform:scaleY(0.8);letter-spacing:1px">&lt;&lt;</div>
<div class="a" style="left:608px;top:411px;width:33px;height:23px;border:1px solid #9a9793;border-radius:3px;box-sizing:border-box;background:linear-gradient(#fdfdfd,#e6e5e3)"></div>
<div class="t" style="left:608px;top:415px;width:33px;text-align:center;font-size:15px;transform:scaleY(0.8);letter-spacing:1px">&lt;</div>
<div class="a" style="left:647px;top:411px;width:33px;height:23px;border:1px solid #9a9793;border-radius:3px;box-sizing:border-box;background:linear-gradient(#fdfdfd,#e6e5e3)"></div>
<div class="t" style="left:647px;top:415px;width:33px;text-align:center;font-size:15px;transform:scaleY(0.8);letter-spacing:1px">&gt;</div>
<div class="a" style="left:686px;top:411px;width:44px;height:23px;border:1px solid #9a9793;border-radius:3px;box-sizing:border-box;background:linear-gradient(#fdfdfd,#e6e5e3)"></div>
<div class="t" style="left:686px;top:415px;width:44px;text-align:center;font-size:15px;transform:scaleY(0.8);letter-spacing:1px">&gt;&gt;</div>
<div class="t" style="left:293px;top:699px;font-size:14px;color:#000;">html</div>
<svg class="i" style="left:326px;top:704px" width="6" height="4" viewBox="0 0 6 4"><path d="M0.5 0.5 L3 3 L5.5 0.5" fill="none" stroke="#444" stroke-width="1.1"/></svg>
<div class="t" style="left:343px;top:699px;font-size:14px;color:#000;">body</div>
<svg class="i" style="left:378px;top:704px" width="6" height="4" viewBox="0 0 6 4"><path d="M0.5 0.5 L3 3 L5.5 0.5" fill="none" stroke="#444" stroke-width="1.1"/></svg>
<div class="a" style="left:391px;top:693px;width:65px;height:27px;border:1px solid #a19e9a;border-radius:3px;box-sizing:border-box;background:linear-gradient(#cfcdca,#c2c0bd)"></div>
<div class="t" style="left:397px;top:700px;font-size:14px;color:#000;">ma:echo</div>
<svg class="i" style="left:999px;top:700px" width="13" height="13" viewBox="0 0 13 13"><defs><linearGradient id="rx" x1="0" y1="0" x2="0" y2="1"><stop offset="0" stop-color="#f87070"/><stop offset="1" stop-color="#d01828"/></linearGradient></defs><path d="M0.8 2.6 L2.6 0.8 L6.5 4.7 L10.4 0.8 L12.2 2.6 L8.3 6.5 L12.2 10.4 L10.4 12.2 L6.5 8.3 L2.6 12.2 L0.8 10.4 L4.7 6.5 Z" fill="url(#rx)" stroke="#b81020" stroke-width="0.7" stroke-linejoin="round"/></svg>
<div class="a" style="left:357px;top:725px;width:663px;height:1px;background:#a39f9b"></div>
<div class="a" style="left:262px;top:725px;width:95px;height:22px;background:#fff;border-bottom-right-radius:2px"></div>
<div class="a" style="left:357px;top:725px;width:1px;height:22px;background:#a39f9b"></div>
<div class="a" style="left:409px;top:725px;width:1px;height:22px;background:#a39f9b"></div>
<div class="a" style="left:469px;top:725px;width:1px;height:22px;background:#a39f9b"></div>
<div class="t" style="left:266px;top:728px;font-size:14px;color:#000;">Visual/Source</div>
<div class="t" style="left:362px;top:728px;font-size:14px;color:#000;">Source</div>
<div class="t" style="left:414px;top:728px;font-size:14px;color:#000;">Preview</div>
<svg class="i" style="left:1033px;top:75px" width="12" height="15" viewBox="0 0 12 15"><path d="M0.5 0.5 H11.5 V14 L9 12.5 L6 14 L3 12.5 L0.5 14 Z" fill="#dcdcf0" stroke="#50506a"/><path d="M2.5 3.5 H9.5 M2.5 5.5 H9.5 M2.5 7.5 H9.5 M2.5 9.5 H9.5" stroke="#40405a"/></svg>
<div class="t" style="left:1050px;top:75px;font-size:14px;color:#000;">Task List</div>
<svg class="i" style="left:1114px;top:77px" width="10" height="10" viewBox="0 0 11 11"><path d="M0.6 0.6 H3.4 L5.5 2.7 L7.6 0.6 H10.4 V3.4 L8.3 5.5 L10.4 7.6 V10.4 H7.6 L5.5 8.3 L3.4 10.4 H0.6 V7.6 L2.7 5.5 L0.6 3.4 Z" fill="#fff" stroke="#000" stroke-width="1.15"/></svg>
<svg class="i" style="left:1241px;top:75px" width="10" height="5" viewBox="0 0 10 5"><rect x="0.5" y="0.5" width="9" height="3" fill="#fff" stroke="#000"/></svg>
<svg class="i" style="left:1259px;top:75px" width="10" height="10" viewBox="0 0 10 10"><rect x="0.5" y="0.5" width="9" height="9" fill="#fff" stroke="#000"/><path d="M0.5 2.5 H9.5" stroke="#000"/></svg>
<svg class="i" style="left:1038px;top:106px" width="16" height="16" viewBox="0 0 16 16"><rect x="0.5" y="3.5" width="10" height="12" fill="#eef2fa" stroke="#8a9ab8"/><g transform="translate(11,3.5) scale(1.0)"><path d="M0 -4 L1.3 -1.3 L4 0 L1.3 1.3 L0 4 L-1.3 1.3 L-4 0 L-1.3 -1.3 Z" fill="#fbe98a" stroke="#b8901c" stroke-width="0.9"/></g></svg>
<svg class="i" style="left:1054px;top:113px" width="7" height="5" viewBox="0 0 7 5"><path d="M0.6 0.6 L3.5 3.4 L6.4 0.6" fill="none" stroke="#333" stroke-width="1.15"/></svg>
<div class="a" style="left:1067px;top:102px;width:26px;height:26px;box-sizing:border-box;border:1px solid #8f8c88;border-radius:4px;background:#c3c1be"></div>
<svg class="i" style="left:1073px;top:107px" width="16" height="16" viewBox="0 0 16 16"><rect x="0.5" y="0.5" width="8" height="4" fill="#e0e8f4" stroke="#6a8ab8"/><path d="M3 5 V14 H7 M3 9 H7" fill="none" stroke="#6a8ab8"/><rect x="7.5" y="7.5" width="3" height="3" fill="#fff" stroke="#6a8ab8"/><rect x="7.5" y="12.5" width="3" height="3" fill="#fff" stroke="#6a8ab8"/><path d="M12 9 H16 M12 14 H16" stroke="#6a8ab8"/></svg>
<svg class="i" style="left:1101px;top:107px" width="16" height="16" viewBox="0 0 16 16"><circle cx="4" cy="4" r="3.5" fill="#fff" stroke="#6a8ab8"/><path d="M4 2 V4 H6" fill="none" stroke="#6a8ab8"/><path d="M3 8 V14 H7 M3 10.5 H7" fill="none" stroke="#6a8ab8"/><rect x="7.5" y="9" width="3" height="3" fill="#fff" stroke="#6a8ab8"/><rect x="7.5" y="12.5" width="3" height="3" fill="#fff" stroke="#6a8ab8"/><path d="M12 10.5 H16 M12 14 H16" stroke="#6a8ab8"/></svg>
<div class="a" style="left:1122px;top:101px;width:2px;height:27px;background:#fff"></div><div class="a" style="left:1124px;top:101px;width:1px;height:27px;background:#a7a4a0"></div><div class="a" style="left:1122px;top:127px;width:3px;height:1px;background:#a7a4a0"></div>
<svg class="i" style="left:1134px;top:108px" width="16" height="16" viewBox="0 0 16 16"><path d="M1 1 L15 15" stroke="#1f3f8a" stroke-width="1.5"/><path d="M12 3 L5 11" stroke="#1f3f8a" stroke-width="1.5"/></svg>
<svg class="i" style="left:1164px;top:108px" width="13" height="13" viewBox="0 0 13 13"><rect x="0.5" y="0.5" width="10" height="10" fill="#dde8f4" stroke="#8aa0c0"/><rect x="2.5" y="2.5" width="10" height="10" fill="#eef4fa" stroke="#7a90b8"/><path d="M4.5 7.5 H10.5" stroke="#1f4f9a" stroke-width="1.6"/></svg>
<svg class="i" style="left:1191px;top:108px" width="14" height="15" viewBox="0 0 14 15"><circle cx="4" cy="5" r="3.5" fill="#c8c8c8"/><circle cx="10" cy="5" r="3.5" fill="#d8d8d8"/><circle cx="7" cy="11" r="3.5" fill="#8a7ab8"/></svg>
<div class="a" style="left:1212px;top:101px;width:2px;height:27px;background:#fff"></div><div class="a" style="left:1214px;top:101px;width:1px;height:27px;background:#a7a4a0"></div><div class="a" style="left:1212px;top:127px;width:3px;height:1px;background:#a7a4a0"></div>
<svg class="i" style="left:1224px;top:107px" width="16" height="16" viewBox="0 0 16 16"><rect x="6" y="1" width="9" height="14" rx="3" fill="#6a9ad8" stroke="#3a6ab0"/><path d="M1 6 L5 2 L5 4 H9 V8 H5 V10 Z M15 10 L11 14 V12 H7 V8 H11 V6 Z" fill="#fbe08a" stroke="#c8901a" stroke-width="0.7"/></svg>
<svg class="i" style="left:1256px;top:108px" width="10" height="6" viewBox="0 0 10 6"><path d="M0.8 0.8 H9.2 L5 5 Z" fill="#fff" stroke="#000" stroke-width="1.2" stroke-linejoin="round"/></svg>
<div class="a" style="left:1029px;top:131px;width:244px;height:1px;background:#a39f9b"></div>
<div class="a" style="left:1033px;top:138px;width:86px;height:25px;border:1px solid #9a9793;border-radius:4px;box-sizing:border-box;background:#fff"></div>
<div class="t" style="left:1037px;top:143px;font-size:14px;color:#a0a0a0;">Find</div>
<svg class="i" style="left:1100px;top:142px" width="16" height="16" viewBox="0 0 16 16"><path d="M15 1 L9 8" stroke="#6a5a3a" stroke-width="1.5"/><path d="M8 6 L11 9 Q8 15 1 15 Q3 10 8 6Z" fill="#c8b070" stroke="#8a7040" stroke-width="0.6"/></svg>
<svg class="i" style="left:1134px;top:146px" width="5" height="8" viewBox="0 0 5 8"><path d="M0 0 L5 4 L0 8 Z" fill="#333"/></svg>
<svg class="i" style="left:1177px;top:146px" width="5" height="8" viewBox="0 0 5 8"><path d="M0 0 L5 4 L0 8 Z" fill="#333"/></svg>
<div class="t" style="left:1148px;top:143px;font-size:14px;color:#2a5db0;">All</div>
<div class="t" style="left:1192px;top:143px;font-size:14px;color:#2a5db0;">Activate...</div>
<div class="a" style="left:1027px;top:168px;width:247px;height:22px;background:linear-gradient(#f2f1f0,#e6e5e3)"></div>
<div class="a" style="left:1027px;top:190px;width:247px;height:145px;background:#fff"></div>
<svg class="i" style="left:1056px;top:172px" width="16" height="16" viewBox="0 0 16 16"><path d="M0.5 4.5 H5 L6 3 H12.5 V13.5 H0.5 Z" fill="#f5d796" stroke="#b8801f"/><path d="M0.5 13.5 L3 7.5 H15.5 L12.5 13.5 Z" fill="#fbe6b0" stroke="#b8801f"/><circle cx="12" cy="12" r="3" fill="#dbe8f8" stroke="#5a7ab0"/></svg>
<div class="t" style="left:1075px;top:171px;font-size:14px;color:#000;">Uncategorized</div>
<div class="a" style="left:1027px;top:335px;width:247px;height:1px;background:#b9cce4"></div>
<div class="a" style="left:1027px;top:336px;width:247px;height:68px;background:linear-gradient(#e2e9f3,#f7f9fc)"></div>
<svg class="i" style="left:1035px;top:342px" width="14" height="14" viewBox="0 0 14 14"><circle cx="7" cy="7" r="6.3" fill="#fff" stroke="#1f4f9a" stroke-width="1.3"/><path d="M7 6 V11 M5.5 11 H8.5 M5.5 6 H7" stroke="#1f4f9a" stroke-width="1.4"/><circle cx="7" cy="3.8" r="1" fill="#1f4f9a"/></svg>
<div class="t" style="left:1055px;top:340px;font-size:18px;line-height:18px;color:#52637a;font-weight:bold;letter-spacing:0.2px">Connect Mylyn</div>
<svg class="i" style="left:1254px;top:343px" width="10" height="11" viewBox="0 0 10 11"><path d="M1.5 1 L5 3.5 L8.5 1 L10 2.5 L7.5 5.5 L10 8.5 L8.5 10 L5 7.5 L1.5 10 L0 8.5 L2.5 5.5 L0 2.5 Z" fill="#fff" stroke="#888" stroke-width="1" stroke-linejoin="round"/></svg>
<div class="t" style="left:1055px;top:365px;font-size:14px;color:#1d3f9a;letter-spacing:0.25px"><u>Connect</u> <span style="color:#000">to your task and ALM</span></div>
<div class="t" style="left:1055px;top:382px;font-size:14px;color:#000;letter-spacing:0.25px">tools.</div>
<svg class="i" style="left:1032px;top:417px" width="14" height="14" viewBox="0 0 14 14"><rect x="0.5" y="0.5" width="5" height="5" fill="#cfe4f8" stroke="#2a6ab8"/><rect x="0.5" y="8.5" width="5" height="5" fill="#cfe4f8" stroke="#2a6ab8"/><path d="M7 2.5 H13 M9 6.5 H13 M7 11.5 H13" stroke="#2a6ab8"/><rect x="6.5" y="5.5" width="2" height="2" fill="none" stroke="#2a6ab8"/></svg>
<div class="t" style="left:1050px;top:418px;font-size:14px;color:#000;">Outline</div>
<svg class="i" style="left:1105px;top:420px" width="10" height="10" viewBox="0 0 11 11"><path d="M0.6 0.6 H3.4 L5.5 2.7 L7.6 0.6 H10.4 V3.4 L8.3 5.5 L10.4 7.6 V10.4 H7.6 L5.5 8.3 L3.4 10.4 H0.6 V7.6 L2.7 5.5 L0.6 3.4 Z" fill="#fff" stroke="#000" stroke-width="1.15"/></svg>
<svg class="i" style="left:1162px;top:419px" width="14" height="14" viewBox="0 0 14 14"><circle cx="4" cy="5" r="3.5" fill="#d0d0d0"/><circle cx="10" cy="5" r="3.5" fill="#dcdcdc"/><circle cx="7" cy="10" r="3.5" fill="#c8c8c8"/></svg>
<svg class="i" style="left:1190px;top:419px" width="13" height="13" viewBox="0 0 13 13"><rect x="0.5" y="0.5" width="10" height="10" fill="#dde8f4" stroke="#8aa0c0"/><rect x="2.5" y="2.5" width="10" height="10" fill="#eef4fa" stroke="#7a90b8"/><path d="M4.5 7.5 H10.5" stroke="#1f4f9a" stroke-width="1.6"/></svg>
<svg class="i" style="left:1219px;top:418px" width="10" height="6" viewBox="0 0 10 6"><path d="M0.8 0.8 H9.2 L5 5 Z" fill="#fff" stroke="#000" stroke-width="1.2" stroke-linejoin="round"/></svg>
<svg class="i" style="left:1241px;top:418px" width="10" height="5" viewBox="0 0 10 5"><rect x="0.5" y="0.5" width="9" height="3" fill="#fff" stroke="#000"/></svg>
<svg class="i" style="left:1259px;top:418px" width="10" height="10" viewBox="0 0 10 10"><rect x="0.5" y="0.5" width="9" height="9" fill="#fff" stroke="#000"/><path d="M0.5 2.5 H9.5" stroke="#000"/></svg>
<div class="a" style="left:1027px;top:441px;width:247px;height:307px;background:#fff"></div>
<div class="a" style="left:1029px;top:558px;width:244px;height:23px;background:linear-gradient(#7fa4d6,#6690c6)"></div>
<div class="clip" style="left:1027px;top:441px;width:246px;height:290px">
<div class="t" style="left:42px;top:6px;font-size:14px;color:#000;">DOCTYPE:html</div>
<div class="t" style="left:42px;top:29px;font-size:14px;color:#000;"><span style="letter-spacing:0.55px">html xmlns=http://www.w3.org/1999/xhtml</span></div>
<div class="t" style="left:60px;top:52px;font-size:14px;color:#000;">body</div>
<div class="t" style="left:78px;top:75px;font-size:14px;color:#000;">#comment</div>
<div class="t" style="left:78px;top:98px;font-size:14px;color:#000;">ma:paginator</div>
<div class="t" style="left:78px;top:121px;font-size:14px;color:#fff;">ma:echo msg=Helle Custom Tags</div>
</div>
<svg class="i" style="left:1050px;top:446px" width="15" height="15" viewBox="0 0 15 15"><path d="M0.5 0.5 H10 L13.5 4 V14.5 H0.5 Z" fill="#f4f2ea" stroke="#9a8a5a"/><path d="M3 13 L11 5" stroke="#a0602a" stroke-width="2.5"/><path d="M2 9 L6 13 L4 15 L0 11Z" fill="#b0602a"/></svg>
<svg class="i" style="left:1031px;top:474px" width="11" height="7" viewBox="0 0 11 7"><path d="M0.8 0.8 H10.2 L5.5 6 Z" fill="#fff" stroke="#000" stroke-width="1.2" stroke-linejoin="round"/></svg>
<svg class="i" style="left:1051px;top:470px" width="13" height="15" viewBox="0 0 13 15"><path d="M0.5 0.5 H9 L12.5 4 V14.5 H0.5 Z" fill="#f4f2ea" stroke="#9a8a5a"/><path d="M5 4 L2 7.5 L5 11 M8 4 L11 7.5 L8 11" fill="none" stroke="#2a6ab8" stroke-width="1.2"/></svg>
<svg class="i" style="left:1049px;top:497px" width="11" height="7" viewBox="0 0 11 7"><path d="M0.8 0.8 H10.2 L5.5 6 Z" fill="#fff" stroke="#000" stroke-width="1.2" stroke-linejoin="round"/></svg>
<svg class="i" style="left:1071px;top:493px" width="10" height="14" viewBox="0 0 10 14"><path d="M0.5 0.5 H9.5 V13.5 H3 L0.5 11 Z" fill="#fbeea0" stroke="#9a8a5a"/><path d="M2.5 4 H7.5 M2.5 7 H7.5" stroke="#5a7ab0"/></svg>
<svg class="i" style="left:1087px;top:516px" width="13" height="12" viewBox="0 0 13 12"><path d="M2 0.5 V7" stroke="#4aa04a" stroke-width="2"/><circle cx="2" cy="10" r="1.5" fill="#4aa04a"/><path d="M5 8.5 H8 M9.5 8.5 H12.5" stroke="#1a3a6a" stroke-width="1"/></svg>
<svg class="i" style="left:1086px;top:541px" width="14" height="10" viewBox="0 0 14 10"><path d="M4.5 1 L1 5 L4.5 9 M9.5 1 L13 5 L9.5 9" fill="none" stroke="#1f5aa8" stroke-width="1.2"/></svg>
<svg class="i" style="left:1086px;top:564px" width="14" height="10" viewBox="0 0 14 10"><path d="M4.5 1 L1 5 L4.5 9 M9.5 1 L13 5 L9.5 9" fill="none" stroke="#c8d4e8" stroke-width="1.2"/></svg>
<div class="a" style="left:1029px;top:732px;width:244px;height:15px;box-sizing:border-box;border:1px solid #9a9793;border-radius:4px;background:#d6d5d2"></div>
<div class="a" style="left:1029px;top:732px;width:15px;height:15px;box-sizing:border-box;border:1px solid #9a9793;border-radius:4px 0 0 4px;background:linear-gradient(#fff,#e8e7e5)"></div>
<div class="a" style="left:1258px;top:732px;width:15px;height:15px;box-sizing:border-box;border:1px solid #9a9793;border-radius:0 4px 4px 0;background:linear-gradient(#fff,#e8e7e5)"></div>
<div class="a" style="left:1043px;top:732px;width:146px;height:15px;box-sizing:border-box;border:1px solid #5f8ac4;background:linear-gradient(#a7c3ea,#86aade)"></div>
<svg class="i" style="left:1034px;top:735px" width="5" height="9" viewBox="0 0 5 9"><path d="M4.5 0.5 L0.5 4.5 L4.5 8.5" fill="none" stroke="#a8a6a2" stroke-width="1.2"/></svg>
<svg class="i" style="left:1263px;top:735px" width="5" height="9" viewBox="0 0 5 9"><path d="M0.5 0.5 L4.5 4.5 L0.5 8.5" fill="none" stroke="#111" stroke-width="1.6"/></svg>
<svg class="i" style="left:1111px;top:736px" width="5" height="6" viewBox="0 0 5 6"><path d="M0.5 0 V6 M2.5 0 V6 M4.5 0 V6" stroke="#3a5a8a"/></svg>
<svg class="i" style="left:264px;top:762px" width="14" height="14" viewBox="0 0 14 14"><rect x="0.5" y="0.5" width="10" height="13" fill="#eef6fa" stroke="#8a8a5a"/><path d="M0.5 7 H10.5 M5.5 0.5 V13.5" stroke="#8aa0c8" stroke-width="0.7"/><circle cx="5.5" cy="4" r="2.3" fill="#e03040"/><path d="M3 12.5 L5.5 8.5 L8 12.5Z" fill="#e8a020"/><path d="M11 1 Q14 3 12 7 Q14 10 11 13" fill="none" stroke="#6a8ac8"/></svg>
<div class="t" style="left:283px;top:762px;font-size:14px;color:#000;">Problems</div>
<svg class="i" style="left:352px;top:764px" width="10" height="10" viewBox="0 0 11 11"><path d="M0.6 0.6 H3.4 L5.5 2.7 L7.6 0.6 H10.4 V3.4 L8.3 5.5 L10.4 7.6 V10.4 H7.6 L5.5 8.3 L3.4 10.4 H0.6 V7.6 L2.7 5.5 L0.6 3.4 Z" fill="#fff" stroke="#000" stroke-width="1.15"/></svg>
<svg class="i" style="left:391px;top:764px" width="14" height="12" viewBox="0 0 14 12"><text x="0" y="10" font-family="Liberation Sans" font-size="12" fill="#2a6ab8">@</text></svg>
<div class="t" style="left:409px;top:762px;font-size:14px;color:#000;">Javadoc</div>
<svg class="i" style="left:469px;top:761px" width="16" height="16" viewBox="0 0 16 16"><path d="M0.5 0.5 H8 L11.5 4 V13.5 H0.5 Z" fill="#f4f2ea" stroke="#9a8a5a"/><path d="M6 3 Q4 3 4 5 V6 L3 7 L4 8 V9 Q4 11 6 11" fill="none" stroke="#2a6ab8"/><path d="M7 9 H11 V7 L15 11 L11 15 V13 H7 Z" fill="#fbe08a" stroke="#c8901a" stroke-width="0.7"/></svg>
<div class="t" style="left:488px;top:762px;font-size:14px;color:#000;">Declaration</div>
<svg class="i" style="left:1219px;top:762px" width="10" height="6" viewBox="0 0 10 6"><path d="M0.8 0.8 H9.2 L5 5 Z" fill="#fff" stroke="#000" stroke-width="1.2" stroke-linejoin="round"/></svg>
<svg class="i" style="left:1241px;top:762px" width="10" height="5" viewBox="0 0 10 5"><rect x="0.5" y="0.5" width="9" height="3" fill="#fff" stroke="#000"/></svg>
<svg class="i" style="left:1259px;top:762px" width="10" height="10" viewBox="0 0 10 10"><rect x="0.5" y="0.5" width="9" height="9" fill="#fff" stroke="#000"/><path d="M0.5 2.5 H9.5" stroke="#000"/></svg>
<div class="t" style="left:262px;top:788px;font-size:14px;color:#000;letter-spacing:0.25px">4 errors, 1 warning, 0 others</div>
<div class="a" style="left:260px;top:805px;width:1px;height:107px;background:#a39f9b"></div>
<div class="a" style="left:261px;top:805px;width:1013px;height:1px;background:#a39f9b"></div>
<div class="a" style="left:261px;top:806px;width:1013px;height:24px;background:linear-gradient(#fdfdfc,#e7e6e4)"></div>
<div class="a" style="left:261px;top:830px;width:1013px;height:1px;background:#a8a5a1"></div>
<div class="a" style="left:261px;top:831px;width:1013px;height:23px;background:#fff"></div>
<div class="a" style="left:261px;top:854px;width:1013px;height:23px;background:#ededed"></div>
<div class="a" style="left:261px;top:877px;width:1013px;height:34px;background:#fff"></div>
<div class="a" style="left:611px;top:809px;width:1px;height:18px;background:#c9c7c4"></div>
<div class="a" style="left:611px;top:831px;width:1px;height:46px;background:repeating-linear-gradient(#000 0 1px,transparent 1px 2px)"></div>
<div class="a" style="left:719px;top:809px;width:1px;height:18px;background:#c9c7c4"></div>
<div class="a" style="left:719px;top:831px;width:1px;height:46px;background:repeating-linear-gradient(#000 0 1px,transparent 1px 2px)"></div>
<div class="a" style="left:862px;top:809px;width:1px;height:18px;background:#c9c7c4"></div>
<div class="a" style="left:862px;top:831px;width:1px;height:46px;background:repeating-linear-gradient(#000 0 1px,transparent 1px 2px)"></div>
<div class="a" style="left:935px;top:809px;width:1px;height:18px;background:#c9c7c4"></div>
<div class="a" style="left:935px;top:831px;width:1px;height:46px;background:repeating-linear-gradient(#000 0 1px,transparent 1px 2px)"></div>
<div class="a" style="left:1272px;top:809px;width:1px;height:18px;background:#c9c7c4"></div>
<div class="t" style="left:268px;top:811px;font-size:14px;color:#000;">Description</div>
<div class="t" style="left:617px;top:811px;font-size:14px;color:#000;">Resource</div>
<div class="t" style="left:725px;top:811px;font-size:14px;color:#000;">Path</div>
<div class="t" style="left:868px;top:811px;font-size:14px;color:#000;">Location</div>
<div class="t" style="left:941px;top:811px;font-size:14px;color:#000;">Type</div>
<svg class="i" style="left:266px;top:837px" width="7" height="11" viewBox="0 0 7 11"><path d="M0.8 0.8 V10.2 L6 5.5 Z" fill="#fff" stroke="#000" stroke-width="1.2" stroke-linejoin="round"/></svg>
<svg class="i" style="left:266px;top:860px" width="7" height="11" viewBox="0 0 7 11"><path d="M0.8 0.8 V10.2 L6 5.5 Z" fill="#fff" stroke="#000" stroke-width="1.2" stroke-linejoin="round"/></svg>
<svg class="i" style="left:284px;top:836px" width="12" height="12" viewBox="0 0 12 12"><circle cx="6" cy="6" r="5.5" fill="#e8404a" stroke="#b02030" stroke-width="0.6"/><path d="M3.5 3.5 L8.5 8.5 M8.5 3.5 L3.5 8.5" stroke="#fff" stroke-width="1.5"/></svg>
<svg class="i" style="left:285px;top:858px" width="11" height="12" viewBox="0 0 11 12"><path d="M5.5 0.8 Q6 0.5 6.5 1 L10.6 10 Q10.8 11 10 11 H1 Q0.2 11 0.4 10 L4.5 1 Q5 0.5 5.5 0.8Z" fill="#f8d060" stroke="#c88a10" stroke-width="0.9"/><path d="M5.5 3.5 V7" stroke="#5a3a00" stroke-width="1.3"/><circle cx="5.5" cy="8.8" r="0.75" fill="#5a3a00"/></svg>
<div class="t" style="left:302px;top:835px;font-size:14px;color:#000;letter-spacing:0.25px">Errors (4 items)</div>
<div class="t" style="left:302px;top:858px;font-size:14px;color:#000;letter-spacing:0.25px">Warnings (1 item)</div>
<div class="a" style="left:5px;top:917px;width:2px;height:27px;background:#fff"></div><div class="a" style="left:7px;top:917px;width:1px;height:27px;background:#a7a4a0"></div><div class="a" style="left:5px;top:943px;width:3px;height:1px;background:#a7a4a0"></div>
<svg class="i" style="left:21px;top:923px" width="16" height="16" viewBox="0 0 16 16"><rect x="0.5" y="2.5" width="5" height="11" fill="#e4f2fb" stroke="#8a7a4a"/><rect x="1" y="3" width="4" height="2" fill="#3d7cc9"/><g transform="translate(11,3.5) scale(1.0)"><path d="M0 -4 L1.3 -1.3 L4 0 L1.3 1.3 L0 4 L-1.3 1.3 L-4 0 L-1.3 -1.3 Z" fill="#fbe98a" stroke="#b8901c" stroke-width="0.9"/></g></svg>
<svg class="i" style="left:85px;top:922px" width="14" height="10" viewBox="0 0 14 10"><path d="M4.5 1 L1 5 L4.5 9 M9.5 1 L13 5 L9.5 9" fill="none" stroke="#1f5aa8" stroke-width="1.2"/></svg>
<div class="t" style="left:105px;top:920px;font-size:14px;color:#000;letter-spacing:0.4px">html/body/ma:echo</div>
<div class="a" style="left:382px;top:915px;width:1px;height:26px;background:#c4c2bf"></div>
<div class="a" style="left:494px;top:915px;width:1px;height:26px;background:#c4c2bf"></div>
<div class="a" style="left:606px;top:915px;width:1px;height:26px;background:#c4c2bf"></div>
<div class="a" style="left:721px;top:917px;width:2px;height:27px;background:#fff"></div><div class="a" style="left:723px;top:917px;width:1px;height:27px;background:#a7a4a0"></div><div class="a" style="left:721px;top:943px;width:3px;height:1px;background:#a7a4a0"></div>
<div class="a" style="left:1050px;top:917px;width:2px;height:27px;background:#fff"></div><div class="a" style="left:1052px;top:917px;width:1px;height:27px;background:#a7a4a0"></div><div class="a" style="left:1050px;top:943px;width:3px;height:1px;background:#a7a4a0"></div>
<div class="t" style="left:390px;top:920px;font-size:14px;color:#000;">Writable</div>
<div class="t" style="left:502px;top:920px;font-size:14px;color:#000;">Smart Insert</div>
<div class="t" style="left:615px;top:920px;font-size:14px;color:#000;">10 : 36</div>
<svg class="i" style="left:318px;top:76px" width="14" height="21" viewBox="0 0 14 21"><path d="M1.5 1.5 V17.5 L5.2 13.8 L8 19.5 L10.5 18.3 L7.8 12.8 H12.8 Z" fill="#fff" stroke="#000" stroke-width="1.3" stroke-linejoin="round"/></svg>
</body></html>
